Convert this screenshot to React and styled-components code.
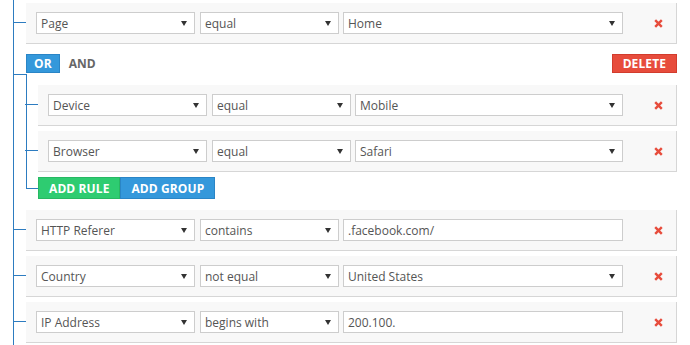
import React from "react";
import styled, { createGlobalStyle } from "styled-components";

const LINE = "#2d7cc0";

const Global = createGlobalStyle`
  html, body { margin: 0; padding: 0; background: #fff; }
  body { font-family: "Open Sans", "Noto Sans", Arial, sans-serif; }
  * { box-sizing: border-box; }
`;

const Page = styled.div`
  width: 690px;
  height: 345px;
  overflow: hidden;
  padding-left: 13px;
`;

const Tree = styled.div`
  width: 664px;
  border-left: 1px solid ${LINE};
  padding: 3px 0 0 12px;
  min-height: 345px;
`;

const Card = styled.div`
  position: relative;
  display: flex;
  align-items: center;
  height: 41px;
  padding: 9px 0 9px 10px;
  margin-bottom: 5px;
  background: #f8f8f8;
  border-right: 1px solid #d6d6d6;
  border-bottom: 1px solid #d6d6d6;
  &::before {
    content: "";
    position: absolute;
    left: -13px;
    top: 19px;
    width: 13px;
    border-top: 1px solid ${LINE};
  }
`;

const Select = styled.div`
  flex: 0 0 auto;
  width: ${(p) => p.$w}px;
  height: 22px;
  margin-right: ${(p) => p.$mr ?? 5}px;
  display: flex;
  align-items: center;
  justify-content: space-between;
  padding: 0 7px 0 4px;
  background: #fff;
  border: 1px solid #cdcdcd;
  color: #555;
  font-size: 12px;
  white-space: nowrap;
`;

const Input = styled(Select)`
  flex: 1 1 auto;
  width: auto;
  margin-right: 0;
`;

const Arrow = () => (
  <svg width="6" height="5" viewBox="0 0 6 5">
    <path d="M0 0 H6 L3 5 Z" fill="#333" />
  </svg>
);

const DelCell = styled.div`
  flex: 0 0 53px;
  display: flex;
  align-items: center;
  padding-left: 31px;
`;

const XIcon = () => (
  <svg width="9" height="9" viewBox="0 0 9 9">
    <path d="M1.2 1.2 L7.8 7.8 M7.8 1.2 L1.2 7.8" stroke="#e74c3c" strokeWidth="2.4" strokeLinecap="butt" />
  </svg>
);

const Group = styled.div`
  position: relative;
  margin: 10px 0 11px 0;
  &::before {
    content: "";
    position: absolute;
    left: -13px;
    top: 20px;
    width: 13px;
    border-top: 1px solid ${LINE};
  }
`;

const Header = styled.div`
  display: flex;
  align-items: center;
  justify-content: space-between;
  height: 19px;
`;

const Conds = styled.div`
  display: flex;
  align-items: center;
  height: 100%;
`;

const Btn = styled.div`
  height: ${(p) => p.$h ?? 19}px;
  display: flex;
  align-items: center;
  padding: 0 ${(p) => p.$px ?? 10}px;
  background: ${(p) => p.$bg};
  border: 1px solid ${(p) => p.$bd};
  color: #fff;
  font-size: 12px;
  font-weight: 700;
  letter-spacing: 0.1px;
`;

const Plain = styled.div`
  padding: 0 9px;
  color: #666;
  font-size: 12px;
  font-weight: 700;
`;

const Body = styled.div`
  position: relative;
  padding: 11px 0 0 12px;
  margin-top: 1px;
  &::before {
    content: "";
    position: absolute;
    left: 0;
    top: 0;
    bottom: 11px;
    border-left: 1px solid ${LINE};
  }
`;

const Actions = styled.div`
  position: relative;
  display: flex;
  margin-top: 1px;
  &::before {
    content: "";
    position: absolute;
    left: -12px;
    top: 11px;
    width: 12px;
    border-top: 1px solid ${LINE};
  }
`;

const Rule = ({ field, op, value, select }) => (
  <Card>
    <Select $w={159}>
      <span>{field}</span>
      <Arrow />
    </Select>
    <Select $w={139} $mr={4}>
      <span>{op}</span>
      <Arrow />
    </Select>
    <Input>
      <span>{value}</span>
      {select && <Arrow />}
    </Input>
    <DelCell>
      <XIcon />
    </DelCell>
  </Card>
);

export default function App() {
  return (
    <Page>
      <Global />
      <Tree>
        <Rule field="Page" op="equal" value="Home" select />
        <Group>
          <Header>
            <Conds>
              <Btn $bg="#3498db" $bd="#2a85c6" $px={7}>OR</Btn>
              <Plain>AND</Plain>
            </Conds>
            <Btn $bg="#e74c3c" $bd="#d23c2d">DELETE</Btn>
          </Header>
          <Body>
            <Rule field="Device" op="equal" value="Mobile" select />
            <Rule field="Browser" op="equal" value="Safari" select />
            <Actions>
              <Btn $h={22} $bg="#2ecc71" $bd="#27b863">ADD RULE</Btn>
              <Btn $h={22} $bg="#3498db" $bd="#2a85c6">ADD GROUP</Btn>
            </Actions>
          </Body>
        </Group>
        <Rule field="HTTP Referer" op="contains" value=".facebook.com/" />
        <Rule field="Country" op="not equal" value="United States" select />
        <Rule field="IP Address" op="begins with" value="200.100." />
      </Tree>
    </Page>
  );
}
